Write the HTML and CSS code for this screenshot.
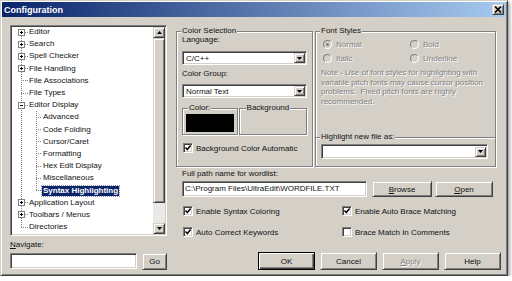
FILE: index.html
```html
<!DOCTYPE html>
<html lang="en">
  <head>
    <meta charset="UTF-8" />
    <title>Configuration</title>
    <link rel="stylesheet" href="styles.css">
  </head>
  <body>
    <div class="dialog">
      <div class="titlebar">
        <span class="title">Configuration</span>
        <span class="close-btn raised">
          <svg width="8" height="7" viewBox="0 0 8 7"><path d="M1 0.5l6 6M7 0.5l-6 6" stroke="#000" stroke-width="1.6"/></svg>
        </span>
      </div>

      <div class="content">
        <!-- left: tree + navigate -->
        <div class="left-col">
          <div class="tree sunken">
            <div class="tree-view">
              <ul class="root">
                <li class="row lvl1"><svg class="expander" width="7" height="7"><rect x="0.5" y="0.5" width="6" height="6" fill="#fff" stroke="#808080"/><path d="M2 3.5h3M3.5 2v3" stroke="#000"/></svg><span class="hline"></span><span class="label">Editor</span></li>
                <li class="row lvl1"><svg class="expander" width="7" height="7"><rect x="0.5" y="0.5" width="6" height="6" fill="#fff" stroke="#808080"/><path d="M2 3.5h3M3.5 2v3" stroke="#000"/></svg><span class="hline"></span><span class="label">Search</span></li>
                <li class="row lvl1"><svg class="expander" width="7" height="7"><rect x="0.5" y="0.5" width="6" height="6" fill="#fff" stroke="#808080"/><path d="M2 3.5h3M3.5 2v3" stroke="#000"/></svg><span class="hline"></span><span class="label">Spell Checker</span></li>
                <li class="row lvl1"><svg class="expander" width="7" height="7"><rect x="0.5" y="0.5" width="6" height="6" fill="#fff" stroke="#808080"/><path d="M2 3.5h3M3.5 2v3" stroke="#000"/></svg><span class="hline"></span><span class="label">File Handling</span></li>
                <li class="row lvl1 leaf"><span class="hline"></span><span class="label">File Associations</span></li>
                <li class="row lvl1 leaf"><span class="hline"></span><span class="label">File Types</span></li>
                <li>
                  <div class="row lvl1"><svg class="expander" width="7" height="7"><rect x="0.5" y="0.5" width="6" height="6" fill="#fff" stroke="#808080"/><path d="M2 3.5h3" stroke="#000"/></svg><span class="hline"></span><span class="label">Editor Display</span></div>
                  <ul class="children">
                    <li class="row lvl2"><span class="hline"></span><span class="label">Advanced</span></li>
                    <li class="row lvl2"><span class="hline"></span><span class="label">Code Folding</span></li>
                    <li class="row lvl2"><span class="hline"></span><span class="label">Cursor/Caret</span></li>
                    <li class="row lvl2"><span class="hline"></span><span class="label">Formatting</span></li>
                    <li class="row lvl2"><span class="hline"></span><span class="label">Hex Edit Display</span></li>
                    <li class="row lvl2"><span class="hline"></span><span class="label">Miscellaneous</span></li>
                    <li class="row lvl2 selected"><span class="hline"></span><span class="label">Syntax Highlighting</span></li>
                  </ul>
                </li>
                <li class="row lvl1"><svg class="expander" width="7" height="7"><rect x="0.5" y="0.5" width="6" height="6" fill="#fff" stroke="#808080"/><path d="M2 3.5h3M3.5 2v3" stroke="#000"/></svg><span class="hline"></span><span class="label">Application Layout</span></li>
                <li class="row lvl1"><svg class="expander" width="7" height="7"><rect x="0.5" y="0.5" width="6" height="6" fill="#fff" stroke="#808080"/><path d="M2 3.5h3M3.5 2v3" stroke="#000"/></svg><span class="hline"></span><span class="label">Toolbars / Menus</span></li>
                <li class="row lvl1 leaf"><span class="hline"></span><span class="label">Directories</span></li>
              </ul>
            </div>
            <div class="scrollbar">
              <div class="sb-btn raised"><svg width="5" height="3"><path d="M0 3h5L2.5 0z"/></svg></div>
              <div class="sb-thumb raised"></div>
              <div class="sb-track"></div>
              <div class="sb-btn raised"><svg width="5" height="3"><path d="M0 0h5L2.5 3z"/></svg></div>
            </div>
          </div>
          <div class="nav-label"><u>N</u>avigate:</div>
          <div class="nav-row">
            <div class="textbox sunken nav-input"></div>
            <button class="btn raised go-btn">Go</button>
          </div>
        </div>

        <!-- right: settings -->
        <div class="right-col">
          <div class="groups">
            <div class="group color-group">
              <div class="group-title">Color Selection</div>
              <div class="field-label">Language:</div>
              <div class="combo sunken lang-combo">
                <span class="combo-text">C/C++</span>
                <span class="combo-btn raised"><svg width="5" height="3"><path d="M0 0h5L2.5 3z"/></svg></span>
              </div>
              <div class="field-label group-label">Color Group:</div>
              <div class="combo sunken group-combo">
                <span class="combo-text">Normal Text</span>
                <span class="combo-btn raised"><svg width="5" height="3"><path d="M0 0h5L2.5 3z"/></svg></span>
              </div>
              <div class="subgroups">
                <div class="group subgroup sub-color">
                  <div class="group-title">Color:</div>
                  <div class="swatch black"></div>
                </div>
                <div class="group subgroup sub-bg">
                  <div class="group-title">Background</div>
                  <div class="swatch white"></div>
                </div>
              </div>
              <div class="check-row auto-bg">
                <span class="checkbox sunken"><svg width="8" height="8"><path d="M1.5 3.5L3.3 5.5L6.6 1.6" stroke="#000" stroke-width="1.5" fill="none"/></svg></span>
                <span class="text">Background Color Automatic</span>
              </div>
            </div>

            <div class="font-col">
              <div class="group font-group">
                <div class="group-title">Font Styles</div>
                <div class="radio-grid">
                  <div class="radio-item"><span class="radio"><span class="dot"></span></span><span class="text">Normal</span></div>
                  <div class="radio-item"><span class="radio"></span><span class="text">Bold</span></div>
                  <div class="radio-item"><span class="radio"></span><span class="text">Italic</span></div>
                  <div class="radio-item"><span class="radio"></span><span class="text">Underline</span></div>
                </div>
                <p class="note">Note - Use of font styles for highlighting with variable pitch fonts may cause cursor position problems.&nbsp; Fixed pitch fonts are highly recommended.</p>
              </div>
              <div class="group highlight-group">
                <div class="group-title">Highlight new file as:</div>
                <div class="combo sunken highlight-combo">
                  <span class="combo-text"></span>
                  <span class="combo-btn raised"><svg width="5" height="3"><path d="M0 0h5L2.5 3z"/></svg></span>
                </div>
              </div>
            </div>
          </div>

          <div class="wordlist">
            <div class="field-label">Full path name for wordlist:</div>
            <div class="path-row">
              <div class="textbox sunken path-input">C:\Program Files\UltraEdit\WORDFILE.TXT</div>
              <button class="btn raised browse-btn"><u>B</u>rowse</button>
              <button class="btn raised open-btn"><u>O</u>pen</button>
            </div>
          </div>

          <div class="options">
            <div class="check-row">
              <span class="checkbox sunken"><svg width="8" height="8"><path d="M1.5 3.5L3.3 5.5L6.6 1.6" stroke="#000" stroke-width="1.5" fill="none"/></svg></span>
              <span class="text">Enable Syntax Coloring</span>
            </div>
            <div class="check-row">
              <span class="checkbox sunken"><svg width="8" height="8"><path d="M1.5 3.5L3.3 5.5L6.6 1.6" stroke="#000" stroke-width="1.5" fill="none"/></svg></span>
              <span class="text">Enable Auto Brace Matching</span>
            </div>
            <div class="check-row">
              <span class="checkbox sunken"><svg width="8" height="8"><path d="M1.5 3.5L3.3 5.5L6.6 1.6" stroke="#000" stroke-width="1.5" fill="none"/></svg></span>
              <span class="text">Auto Correct Keywords</span>
            </div>
            <div class="check-row">
              <span class="checkbox sunken"></span>
              <span class="text">Brace Match In Comments</span>
            </div>
          </div>

          <div class="actions">
            <button class="btn raised default">OK</button>
            <button class="btn raised">Cancel</button>
            <button class="btn raised disabled"><u>A</u>pply</button>
            <button class="btn raised">Help</button>
          </div>
        </div>
      </div>
    </div>
  </body>
</html>
```

FILE: styles.css
```css
* {
  margin: 0;
  padding: 0;
  box-sizing: border-box;
}

body {
  background: #fff;
  font-family: "Liberation Sans", Arial, sans-serif;
  font-size: 8px;
  color: #111;
}

/* 3d borders */
.raised {
  background: #d4d0c8;
  border: 1px solid;
  border-color: #d4d0c8 #404040 #404040 #d4d0c8;
  box-shadow: inset 1px 1px 0 #fff, inset -1px -1px 0 #808080;
}

.sunken {
  background: #fff;
  border: 1px solid;
  border-color: #808080 #fff #fff #808080;
  box-shadow: inset 1px 1px 0 #404040, inset -1px -1px 0 #d4d0c8;
}

.dialog {
  width: 508px;
  height: 276px;
  background: #d4d0c8;
  border: 1px solid;
  border-color: #d4d0c8 #404040 #404040 #d4d0c8;
  box-shadow: inset 1px 1px 0 #fff, inset -1px -1px 0 #808080, 2px 2px 3px rgba(0, 0, 0, 0.35);
  padding: 1px;
}

.titlebar {
  height: 15px;
  background: linear-gradient(to right, #0a246a, #a6caf0);
  display: flex;
  align-items: center;
  justify-content: space-between;
  padding: 0 2px;
}

.title {
  color: #fff;
  font-weight: bold;
  font-size: 9px;
}

.close-btn {
  width: 12px;
  height: 11px;
  display: flex;
  align-items: center;
  justify-content: center;
}

.content {
  display: flex;
  padding: 8px 0 0 8px;
}

/* tree */
.left-col {
  width: 157px;
}

.tree {
  height: 211px;
  display: flex;
  padding: 1px;
}

.tree-view {
  flex: 1;
  background: #fff;
  overflow: hidden;
}

.root {
  list-style: none;
  margin-top: -1px;
  background: repeating-linear-gradient(#808080 0 1px, transparent 1px 2px) 9px 6px / 1px 195px no-repeat;
}

.children {
  list-style: none;
  background: repeating-linear-gradient(#808080 0 1px, transparent 1px 2px) 24px 0 / 1px 80px no-repeat;
}

.row {
  height: 12.2px;
  display: flex;
  align-items: center;
  white-space: nowrap;
}

.lvl1 {
  padding-left: 6px;
}

.lvl2 {
  padding-left: 24px;
}

.expander {
  display: block;
  flex: none;
}

.hline {
  height: 1px;
  flex: none;
  width: 3px;
  background: repeating-linear-gradient(to right, #808080 0 1px, transparent 1px 2px);
}

.leaf .hline {
  margin-left: 3px;
  width: 7px;
}

.lvl2 .hline {
  width: 6px;
}

.label {
  padding: 0 1px;
  line-height: 10px;
}

.selected .label {
  background: #0a246a;
  color: #fff;
  font-weight: bold;
  outline: 1px dotted #8a8fb0;
}

.scrollbar {
  width: 12px;
  display: flex;
  flex-direction: column;
}

.sb-btn {
  height: 11px;
  display: flex;
  align-items: center;
  justify-content: center;
}

.sb-thumb {
  height: 165px;
}

.sb-track {
  flex: 1;
  background: #ebe9e5;
}

.nav-label {
  margin-top: 4px;
  height: 10px;
  line-height: 10px;
}

.nav-row {
  display: flex;
  align-items: flex-start;
  margin-top: 3px;
}

.nav-input {
  width: 127px;
  height: 16px;
}

.btn {
  font-family: inherit;
  font-size: 8px;
  color: #111;
  display: flex;
  align-items: center;
  justify-content: center;
}

.go-btn {
  width: 25px;
  height: 17px;
  margin-left: 5px;
}

/* right side */
.right-col {
  width: 328px;
  margin-left: 9px;
}

.groups {
  display: flex;
  margin-top: 6px;
}

.group {
  border: 1px solid #808080;
  box-shadow: inset 1px 1px 0 #fff, 1px 1px 0 #fff;
  padding: 0 5px;
}

.group-title {
  width: fit-content;
  height: 10px;
  line-height: 10px;
  margin: -6px 0 -1px -1px;
  padding: 0 1px;
  background: #d4d0c8;
}

.color-group {
  width: 137px;
  height: 136px;
}

.font-col {
  width: 181px;
  margin-left: 2px;
}

.font-group {
  height: 106px;
  border-bottom: none;
}

.highlight-group {
  height: 30px;
}

.field-label {
  height: 10px;
  line-height: 10px;
}

.combo {
  height: 14px;
  display: flex;
  align-items: center;
  padding: 1px 1px 1px 3px;
}

.combo-text {
  flex: 1;
  white-space: nowrap;
}

.combo-btn {
  width: 11px;
  height: 10px;
  display: flex;
  align-items: center;
  justify-content: center;
}

.lang-combo {
  margin-top: 6px;
}

.group-label {
  margin-top: 4px;
}

.group-combo {
  margin-top: 5px;
}

.subgroups {
  display: flex;
  margin-top: 10px;
}

.subgroup {
  padding: 0 3px 2px;
}

.subgroup .group-title {
  margin: -6px 0 1px 2px;
}

.sub-color {
  width: 56px;
}

.sub-bg {
  width: 69px;
  margin-left: 1px;
}

.sub-bg .group-title {
  margin-left: 3px;
}

.swatch {
  height: 18px;
}

.swatch.black {
  background: #000;
}

.check-row {
  display: flex;
  align-items: center;
  height: 12px;
  white-space: nowrap;
}

.auto-bg {
  height: 10px;
  margin-top: 8px;
}

.checkbox {
  width: 10px;
  height: 10px;
  flex: none;
  margin-left: 1px;
}

.checkbox svg {
  display: block;
}

.check-row .text {
  margin-left: 3px;
}

.radio-grid {
  display: grid;
  grid-template-columns: 87px 1fr;
  grid-auto-rows: 14px;
  margin-top: 2px;
}

.radio-item {
  display: flex;
  align-items: center;
  color: #808080;
  text-shadow: 1px 1px 0 #fff;
}

.radio {
  width: 9px;
  height: 9px;
  margin-left: 2px;
  border-radius: 50%;
  border: 1px solid;
  border-color: #808080 #fff #fff #808080;
  background: #d4d0c8;
  display: flex;
  align-items: center;
  justify-content: center;
}

.dot {
  width: 3px;
  height: 3px;
  border-radius: 50%;
  background: #808080;
}

.radio-item .text {
  margin-left: 4px;
}

.note {
  margin-top: 3px;
  line-height: 9.6px;
  color: #808080;
  text-shadow: 1px 1px 0 #fff;
}

.highlight-combo {
  width: 167px;
  height: 15px;
  margin-top: 3px;
}

.wordlist {
  padding-left: 6px;
  margin-top: 2px;
}

.path-row {
  display: flex;
  margin-top: 2px;
}

.path-input {
  width: 185px;
  height: 16px;
  padding-left: 2px;
  line-height: 14px;
  white-space: nowrap;
  overflow: hidden;
}

.browse-btn {
  width: 60px;
  height: 16px;
  margin-left: 5px;
}

.open-btn {
  width: 58px;
  height: 16px;
  margin-left: 3px;
}

.options {
  display: grid;
  grid-template-columns: 159px 1fr;
  grid-auto-rows: 12px;
  row-gap: 9px;
  padding-left: 6px;
  margin-top: 8px;
}

.actions {
  display: flex;
  justify-content: flex-end;
  gap: 5px;
  margin-top: 14px;
  padding-right: 3px;
}

.actions .btn {
  width: 57px;
  height: 18px;
}

.btn.default {
  border-color: #000;
  box-shadow: inset 1px 1px 0 #fff, inset -1px -1px 0 #404040, inset -2px -2px 0 #808080;
}

.btn.disabled {
  color: #808080;
  text-shadow: 1px 1px 0 #fff;
}
```
